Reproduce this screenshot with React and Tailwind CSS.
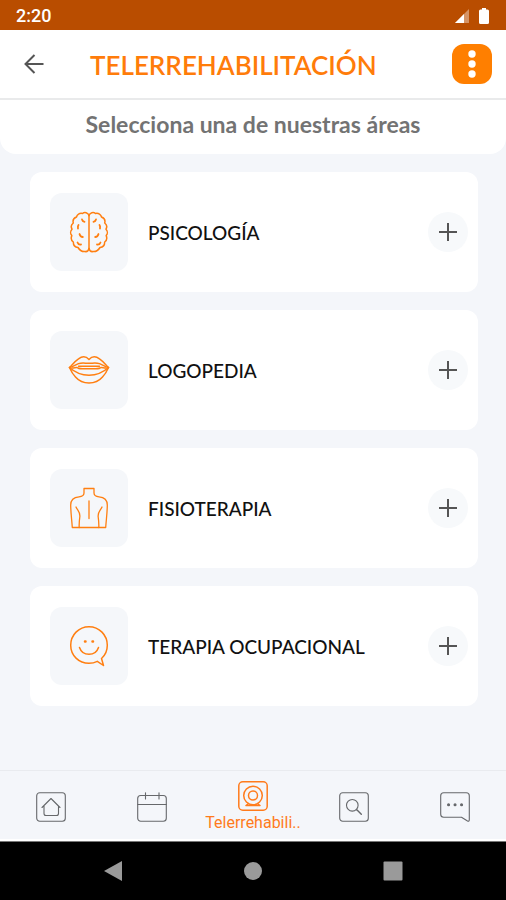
import React, {useState} from "react";

function BrainIcon() {
    return (
        <svg viewBox="0 0 40 42" className="w-10 h-[42px]" fill="none" stroke="currentColor" strokeWidth="1.5" strokeLinecap="round" strokeLinejoin="round">
            <path d="M20 4.500C19 1.500 15.500.8 13.500 2.500C10.500 1.800 8 3.500 7.500 6C4.800 7 3.600 9.500 4.300 12C2.300 13.500 1.800 16 3 18.200C1.300 20 1.200 22.800 2.800 24.600C1.800 27 2.300 29.500 4.300 31C4.300 34 6.300 36.200 9 36.500C10.500 39 13 40.800 15.800 40.500C18 41 19.500 39.500 20 37.500" />
            <path d="M20 4.500C21 1.500 24.500.8 26.500 2.500C29.500 1.800 32 3.500 32.500 6C35.200 7 36.400 9.500 35.700 12C37.700 13.500 38.200 16 37 18.200C38.700 20 38.800 22.800 37.200 24.600C38.200 27 37.700 29.500 35.700 31C35.700 34 33.700 36.200 31 36.500C29.500 39 27 40.800 24.200 40.500C22 41 20.500 39.500 20 37.500" />
            <path d="M20 4.500V37.500" />
            <path d="M13 8.500C13.300 9.800 14 10.500 15.500 10.800M9.500 14C8.800 15 8.700 16 9 17.500M10.500 23C11 25 12 26 13.800 26M8.500 31.500C9 33 10.300 33.800 12 33.500" strokeWidth="1.800" />
            <path d="M27 8.500C26.700 9.800 26 10.500 24.500 10.800M30.500 14C31.200 15 31.300 16 31 17.500M29.500 23C29 25 28 26 26.200 26M31.500 31.500C31 33 29.700 33.800 28 33.500" strokeWidth="1.800" />
        </svg>
    );
}

function LipsIcon() {
    return (
        <svg viewBox="0 0 42 30" className="w-[42px] h-[30px]" fill="none" stroke="currentColor" strokeWidth="1.500" strokeLinecap="round" strokeLinejoin="round">
            <path d="M1.500 12.500C4 10 6.500 6.500 10.500 3.800C14 1.300 18 1.200 21 4.500C24 1.200 28 1.300 31.500 3.800C35.500 6.500 38 10 40.500 12.500C39 16 37.500 19 34.500 22C31 26 26.500 28 21 28C15.500 28 11 26 7.500 22C4.500 19 3 16 1.500 12.500Z" />
            <path d="M1.500 12.500C4.500 12 7 10 10.500 8.600C14 7.600 17 8.300 21 8.300C25 8.300 28 7.600 31.500 8.600C35 10 37.500 12 40.500 12.500" />
            <path d="M1.500 12.500C7 17.500 13 20.200 21 20.200C29 20.200 35 17.500 40.500 12.500" />
            <path d="M4 13C7 13 8.500 12 10 13C12 14.200 16 13.800 21 13.800C26 13.800 30 14.200 32 13C33.500 12 35 13 38 13M10.500 11.200H31.500" />
        </svg>
    );
}

function BackIcon() {
    return (
        <svg viewBox="0 0 40 42" className="w-10 h-[42px]" fill="none" stroke="currentColor" strokeWidth="1.300" strokeLinecap="round" strokeLinejoin="round">
            <path d="M15 1.500H25V6C25 9 27 9.500 30 9.800C35.500 10.300 38.300 13 38.300 18C38.300 25 37.300 32 36.700 40.500H3.300C2.700 32 1.700 25 1.700 18C1.700 13 4.500 10.300 10 9.800C13 9.500 15 9 15 6Z" />
            <path d="M20 14V31.500" />
            <path d="M7 20C8.500 23.500 11.500 25 10.800 30C10.300 33.500 10 36.500 10.200 40.500M33 20C31.500 23.500 28.500 25 29.200 30C29.700 33.500 30 36.500 29.800 40.500" />
        </svg>
    );
}

function SmileIcon() {
    return (
        <svg viewBox="0 0 40 42" className="w-10 h-[42px]" fill="none" stroke="currentColor" strokeWidth="1.500" strokeLinecap="round" strokeLinejoin="round">
            <path d="M32.500 33.500C36.300 30.200 38.300 25.500 38.300 20.300C38.300 10 30.200 1.700 20 1.700C9.800 1.700 1.700 10 1.700 20.300C1.700 30.500 9.800 38.300 20 38.300C23 38.300 25.800 37.600 28.300 36.300L34.500 40.500Z" />
            <path d="M10.500 22.500C12 27 15.500 29.300 20 29.300C24.500 29.300 28 27 29.500 22.500" />
            <path d="M16 16.500H16.500M23.500 16.500H24" strokeWidth="2.500" />
        </svg>
    );
}

function HomeIcon() {
    return (
        <svg viewBox="0 0 30 30" className="size-[30px]" fill="none" stroke="currentColor" strokeWidth="1.100" strokeLinecap="round" strokeLinejoin="round">
            <rect x=".7" y=".7" width="28.600" height="28.600" rx="3" />
            <path d="M6 15.500L15 6.500L24 15.500M8 14V21.500Q8 23.500 10 23.500H20.500Q22.500 23.500 22.500 21.500V14" />
        </svg>
    );
}

function CalendarIcon() {
    return (
        <svg viewBox="0 0 30 30" className="size-[30px]" fill="none" stroke="currentColor" strokeWidth="1.100" strokeLinecap="round">
            <rect x=".7" y="3.500" width="28.600" height="25.800" rx="3" />
            <path d="M.7 12.500H29.300M8.500 .7V7M22 .7V7" />
        </svg>
    );
}

function WebcamIcon() {
    return (
        <svg viewBox="0 0 30 30" className="size-[30px]" fill="none" stroke="currentColor" strokeWidth="1.500" strokeLinecap="round" strokeLinejoin="round">
            <rect x=".8" y=".8" width="28.400" height="28.400" rx="4" />
            <circle cx="15" cy="14.500" r="9.300" />
            <circle cx="15" cy="14.500" r="4.500" />
            <path d="M10.500 22.500L8 24.500H22L19.500 22.500" />
        </svg>
    );
}

function SearchIcon() {
    return (
        <svg viewBox="0 0 30 30" className="size-[30px]" fill="none" stroke="currentColor" strokeWidth="1.100" strokeLinecap="round">
            <rect x=".7" y=".7" width="28.600" height="28.600" rx="3" />
            <circle cx="13.300" cy="13.300" r="5.800" />
            <path d="M17.800 17.800L22.300 22.300" strokeWidth="1.400" />
        </svg>
    );
}

function ChatIcon() {
    return (
        <svg viewBox="0 0 30 30" className="size-[30px]" fill="none" stroke="currentColor" strokeWidth="1.100" strokeLinecap="round" strokeLinejoin="round">
            <path d="M3.700 .7H26.300Q29.300 .7 29.300 3.700V27.500Q29.300 29.800 27.500 29L21.500 25.300H3.700Q.7 25.300 .7 22.300V3.700Q.7 .7 3.700 .7Z" />
            <path d="M8.500 12.800H8.600M15 12.800H15.100M21.500 12.800H21.600" strokeWidth="3" />
        </svg>
    );
}

const areas = [
    {name: "PSICOLOGÍA", icon: <BrainIcon />},
    {name: "LOGOPEDIA", icon: <LipsIcon />},
    {name: "FISIOTERAPIA", icon: <BackIcon />},
    {name: "TERAPIA OCUPACIONAL", icon: <SmileIcon />},
];

const tabs = [
    {id: "home", label: "Inicio", icon: <HomeIcon />},
    {id: "calendar", label: "Calendario", icon: <CalendarIcon />},
    {id: "rehab", label: "Telerrehabili..", icon: <WebcamIcon />},
    {id: "search", label: "Buscar", icon: <SearchIcon />},
    {id: "chat", label: "Mensajes", icon: <ChatIcon />},
];

function StatusBar() {
    return (
        <div className="flex h-[30px] items-center justify-between bg-[#b94d00] px-4 pt-0.5 text-white">
            <span className="font-[Roboto,sans-serif] text-lg font-medium">2:20</span>
            <div className="flex items-center gap-2">
                <svg viewBox="0 0 16 16" className="size-4" fill="currentColor">
                    <path d="M15 1V15H1Z" opacity=".4" />
                    <path d="M10 6V15H1Z" />
                </svg>
                <svg viewBox="0 0 12 18" className="w-3 h-[18px]" fill="currentColor">
                    <path d="M4 1H8V2.500H9.500Q11 2.500 11 4V15.500Q11 17 9.500 17H2.500Q1 17 1 15.500V4Q1 2.500 2.500 2.500H4Z" />
                </svg>
            </div>
        </div>
    );
}

function Header() {
    return (
        <header className="flex h-[70px] items-center border-b-2 border-[#e9eaeb] bg-white pl-5 pr-3.5">
            <button aria-label="Volver" className="flex size-7 items-center justify-center text-[#555]">
                <svg viewBox="0 0 20 20" className="size-5" fill="none" stroke="currentColor" strokeWidth="2">
                    <path d="M19.500 10H1.500M10.500 1L1.500 10L10.500 19" />
                </svg>
            </button>
            <h1 className="ml-[42px] flex-1 pt-0.5 text-[26px] font-semibold text-[#ff7c0a]">TELERREHABILITACIÓN</h1>
            <button aria-label="Menú" className="flex size-10 items-center justify-center rounded-xl bg-[#ff7f00] text-white">
                <svg viewBox="0 0 8 28" className="w-2 h-7" fill="currentColor">
                    <circle cx="4" cy="4" r="3.700" />
                    <circle cx="4" cy="14" r="3.700" />
                    <circle cx="4" cy="24" r="3.700" />
                </svg>
            </button>
        </header>
    );
}

function AreaCard({area}) {
    return (
        <li className="flex h-30 items-center rounded-xl bg-white pl-5 pr-2.5">
            <div className="flex size-[78px] shrink-0 items-center justify-center rounded-xl bg-[#f5f7fa] text-[#ff7f11]">
                {area.icon}
            </div>
            <h3 className="ml-5 flex-1 pt-0.5 text-[19px] leading-7 font-medium text-[#111]">{area.name}</h3>
            <button
                aria-label={`Abrir ${area.name}`}
                className="flex size-10 items-center justify-center rounded-full bg-[#f7f9fb] text-[#555]"
            >
                <svg viewBox="0 0 18 18" className="size-[18px]" fill="none" stroke="currentColor" strokeWidth="2">
                    <path d="M9 0V18M0 9H18" />
                </svg>
            </button>
        </li>
    );
}

function BottomNav() {
    const [active, setActive] = useState("rehab");

    return (
        <nav className="flex h-[71px] border-t border-b-2 border-t-[#e9ebef] border-b-white bg-[#f4f6fa]">
            {tabs.map((tab) => (
                <button
                    key={tab.id}
                    aria-label={tab.label}
                    onClick={() => setActive(tab.id)}
                    className={`flex flex-1 basis-0 flex-col items-center justify-center gap-0.5 pt-1 cursor-pointer ${
                        active === tab.id ? "text-[#ff7b1c]" : "text-[#66686b]"
                    }`}
                >
                    {tab.icon}
                    {active === tab.id && (
                        <span className="font-[Roboto,sans-serif] text-base leading-5">{tab.label}</span>
                    )}
                </button>
            ))}
        </nav>
    );
}

function SystemBar() {
    return (
        <div className="flex h-[59px] items-center justify-center gap-30 border-t border-[#777] bg-black text-[#9a9a9a]">
            <button aria-label="Atrás">
                <svg viewBox="0 0 20 20" className="size-5" fill="currentColor">
                    <path d="M19 0V20L1 10Z" />
                </svg>
            </button>
            <button aria-label="Inicio del sistema">
                <svg viewBox="0 0 20 20" className="size-5" fill="currentColor">
                    <circle cx="10" cy="10" r="9" />
                </svg>
            </button>
            <button aria-label="Recientes">
                <svg viewBox="0 0 20 20" className="size-5" fill="currentColor">
                    <rect x=".5" y=".5" width="19" height="19" rx="1" />
                </svg>
            </button>
        </div>
    );
}

function App() {
    return (
        <div className="flex min-h-screen flex-col bg-[#f4f6fa] font-[Lato,sans-serif]">
            <StatusBar />
            <Header />
            {/* areas section */}
            <main className="flex-1">
                <h2 className="rounded-b-2xl bg-white pt-2.5 pb-4 text-center text-[23px] leading-7 font-bold text-[#737373]">
                    Selecciona una de nuestras áreas
                </h2>
                <ul className="flex flex-col gap-[18px] pl-[30px] pr-7 pt-[18px]">
                    {areas.map((area) => (
                        <AreaCard key={area.name} area={area} />
                    ))}
                </ul>
            </main>
            <BottomNav />
            <SystemBar />
        </div>
    );
}

export default App;
